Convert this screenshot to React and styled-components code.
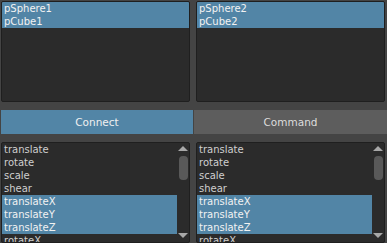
import styled, { createGlobalStyle } from "styled-components";

const GlobalStyle = createGlobalStyle`
  html, body {
    margin: 0;
    padding: 0;
    background: #444444;
  }
  body {
    font-family: "DejaVu Sans", "Liberation Sans", sans-serif;
    font-size: 10px;
  }
`;

const Window = styled.div`
  width: 387px;
  height: 243px;
  overflow: hidden;
  background: #444444;
  display: flex;
  flex-direction: column;
  padding-top: 1px;
  box-sizing: border-box;
`;

const Pair = styled.div`
  display: grid;
  grid-template-columns: 189px 189px;
  column-gap: 6px;
  padding-left: 1px;
`;

const ListBox = styled.div`
  height: ${(props) => props.h}px;
  box-sizing: border-box;
  border: 1px solid #1f1f1f;
  border-radius: 2px;
  background: #2b2b2b;
  display: flex;
  overflow: hidden;
`;

const Rows = styled.div`
  flex: 1;
  min-width: 0;
  display: flex;
  flex-direction: column;
`;

const Row = styled.div`
  height: 13px;
  line-height: 13px;
  padding-left: 2px;
  flex-shrink: 0;
  white-space: nowrap;
  color: ${(props) => (props.selected ? "#f2f2f2" : "#cfcfcf")};
  background: ${(props) => (props.selected ? "#5285a6" : "transparent")};
`;

const ScrollBar = styled.div`
  width: 12px;
  flex-shrink: 0;
  display: flex;
  flex-direction: column;
  align-items: center;
  padding: 3px 0 4px;
  box-sizing: border-box;
`;

const Arrow = styled.div`
  width: 0;
  height: 0;
  border-left: 5px solid transparent;
  border-right: 5px solid transparent;
  ${(props) =>
    props.down
      ? "border-top: 5px solid #a8a8a8;"
      : "border-bottom: 5px solid #a8a8a8;"}
`;

const Handle = styled.div`
  width: 9px;
  height: 24px;
  margin-top: 5px;
  border-radius: 4px;
  background: #595959;
`;

const Spacer = styled.div`
  flex: 1;
`;

const ButtonRow = styled.div`
  display: grid;
  grid-template-columns: 192px 193px;
  column-gap: 1px;
  padding-left: 1px;
  margin: 8px 0;
`;

const Button = styled.div`
  height: 24px;
  line-height: 24px;
  text-align: center;
  font-size: 10.5px;
  color: ${(props) => (props.active ? "#f0f0f0" : "#dcdcdc")};
  background: ${(props) => (props.active ? "#5285a6" : "#5d5d5d")};
`;

const attrs = [
  "translate",
  "rotate",
  "scale",
  "shear",
  "translateX",
  "translateY",
  "translateZ",
  "rotateX",
  "rotateY",
];
const selectedAttrs = ["translateX", "translateY", "translateZ"];

function NodeList({ items }) {
  return (
    <ListBox h={101}>
      <Rows>
        {items.map((name) => (
          <Row key={name} selected>
            {name}
          </Row>
        ))}
      </Rows>
    </ListBox>
  );
}

function AttrList() {
  return (
    <ListBox h={101}>
      <Rows>
        {attrs.map((name) => (
          <Row key={name} selected={selectedAttrs.includes(name)}>
            {name}
          </Row>
        ))}
      </Rows>
      <ScrollBar>
        <Arrow />
        <Handle />
        <Spacer />
        <Arrow down />
      </ScrollBar>
    </ListBox>
  );
}

export default function App() {
  return (
    <>
      <GlobalStyle />
      <Window>
        <Pair>
          <NodeList items={["pSphere1", "pCube1"]} />
          <NodeList items={["pSphere2", "pCube2"]} />
        </Pair>
        <ButtonRow>
          <Button active>Connect</Button>
          <Button>Command</Button>
        </ButtonRow>
        <Pair>
          <AttrList />
          <AttrList />
        </Pair>
      </Window>
    </>
  );
}
